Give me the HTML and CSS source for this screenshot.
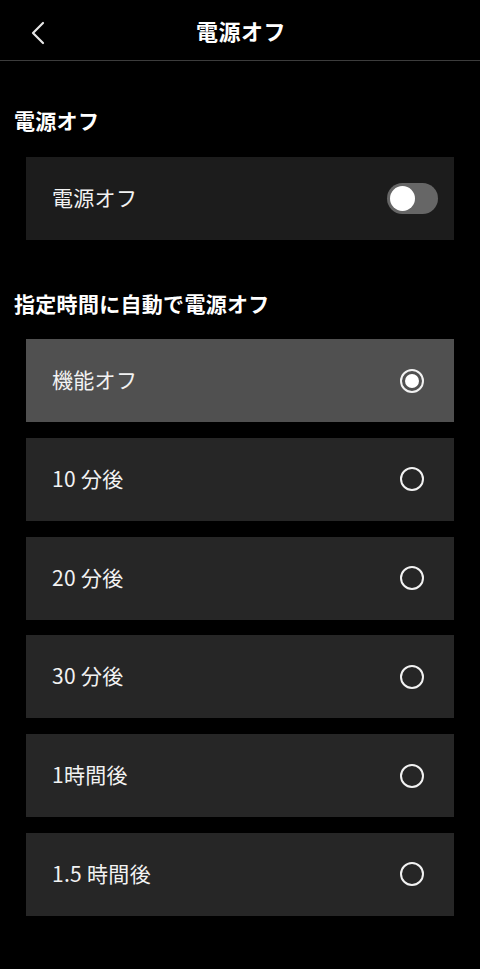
FILE: index.html
```html
<!DOCTYPE html>
<html lang="ja">
<head>
<meta charset="utf-8">
<link rel="stylesheet" href="styles.css">
</head>
<body>
<header class="topbar">
  <svg class="back" width="14" height="24" viewBox="0 0 14 24"><path d="M12 2 L2 12 L12 22" fill="none" stroke="#e6e6e6" stroke-width="2.2" stroke-linecap="round" stroke-linejoin="round"/></svg>
  <h1 class="title">電源オフ</h1>
</header>
<main class="content">
  <h2 class="section-title first">電源オフ</h2>
  <div class="card toggle-card">
    <span class="label">電源オフ</span>
    <span class="switch"><span class="knob"></span></span>
  </div>
  <h2 class="section-title second">指定時間に自動で電源オフ</h2>
  <div class="list">
    <div class="card option selected"><span class="label">機能オフ</span><span class="radio on"></span></div>
    <div class="card option"><span class="label">10 分後</span><span class="radio"></span></div>
    <div class="card option"><span class="label">20 分後</span><span class="radio"></span></div>
    <div class="card option"><span class="label">30 分後</span><span class="radio"></span></div>
    <div class="card option"><span class="label">1時間後</span><span class="radio"></span></div>
    <div class="card option"><span class="label">1.5 時間後</span><span class="radio"></span></div>
  </div>
</main>
</body>
</html>
```
FILE: styles.css
```css
* { box-sizing: border-box; }
html, body { margin: 0; padding: 0; }
body {
  background: #000;
  color: #fff;
  font-family: "Noto Sans CJK JP", "Noto Sans", sans-serif;
  width: 480px;
  height: 969px;
  overflow: hidden;
}
.topbar {
  position: relative;
  height: 61px;
  border-bottom: 1px solid #3c3c3c;
  display: flex;
  align-items: center;
  justify-content: center;
}
.back {
  position: absolute;
  left: 31px;
  top: 21px;
}
.title {
  margin: 0;
  font-size: 22px;
  font-weight: 700;
  line-height: 30px;
  letter-spacing: 0.5px;
  padding-left: 2px;
  padding-bottom: 1px;
}
.content { padding: 0 26px; }
.section-title {
  margin: 0 0 0 -12px;
  font-size: 21px;
  font-weight: 700;
  line-height: 30px;
  letter-spacing: 0.3px;
}
.section-title.first { margin-top: 44px; margin-bottom: 22px; }
.section-title.second { margin-top: 48px; margin-bottom: 21px; }
.card {
  height: 83px;
  display: flex;
  align-items: center;
  justify-content: space-between;
  padding-left: 26px;
  background: #262626;
}
.label {
  font-size: 21px;
  line-height: 28px;
  color: #f2f2f2;
  letter-spacing: 0.3px;
  padding-bottom: 3px;
}
.toggle-card { background: #1c1c1c; padding-right: 16px; }
.switch {
  width: 51px;
  height: 31px;
  border-radius: 16px;
  background: #666;
  display: flex;
  align-items: center;
  padding-left: 3px;
}
.knob {
  width: 25px;
  height: 25px;
  border-radius: 50%;
  background: #fff;
}
.list { display: flex; flex-direction: column; gap: 15.8px; }
.option { padding-right: 30px; }
.option.selected { background: #505050; }
.radio {
  width: 24px;
  height: 24px;
  border: 2px solid #f2f2f2;
  border-radius: 50%;
  display: flex;
  align-items: center;
  justify-content: center;
}
.radio.on::after {
  content: "";
  width: 14px;
  height: 14px;
  border-radius: 50%;
  background: #fff;
}
```
